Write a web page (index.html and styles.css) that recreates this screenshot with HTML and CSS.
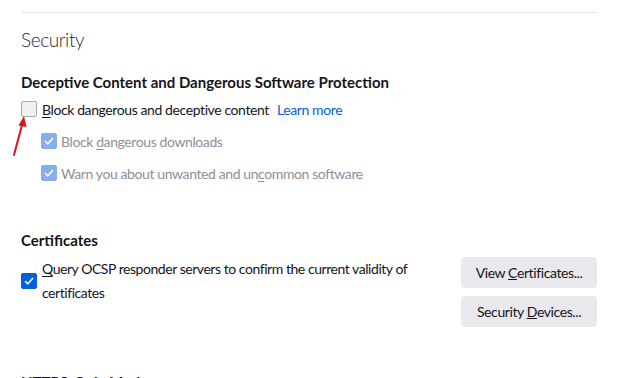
FILE: index.html
```html
<!DOCTYPE html>
<html lang="en">
<head>
  <meta charset="UTF-8">
  <title>Settings - Privacy &amp; Security</title>
  <link rel="stylesheet" href="styles.css">
</head>
<body>

<div class="pane">
  <hr class="divider">

  <h1 class="pane-title">Security</h1>

  <section class="group">
    <h2>Deceptive Content and Dangerous Software Protection</h2>

    <div class="row">
      <span class="box"></span>
      <span class="label"><u>B</u>lock dangerous and deceptive content</span>
      <a class="learn" href="#">Learn more</a>
      <svg class="arrow" width="20" height="48" viewBox="0 0 20 48">
        <line x1="3" y1="42" x2="11" y2="12" stroke="#d9141c" stroke-width="2" stroke-linecap="round"/>
        <polygon points="13,3 15.5,14 7.5,12.5" fill="#d9141c"/>
      </svg>
    </div>

    <div class="row sub">
      <span class="box checked faded"><svg viewBox="0 0 16 16"><path d="M3.5 8.2 L6.6 11.2 L12.6 4.6" fill="none" stroke="#fff" stroke-width="1.8"/></svg></span>
      <span class="label muted">Block <u>d</u>angerous downloads</span>
    </div>

    <div class="row sub">
      <span class="box checked faded"><svg viewBox="0 0 16 16"><path d="M3.5 8.2 L6.6 11.2 L12.6 4.6" fill="none" stroke="#fff" stroke-width="1.8"/></svg></span>
      <span class="label muted">Warn you about unwanted and un<u>c</u>ommon software</span>
    </div>
  </section>

  <section class="group certs">
    <h2>Certificates</h2>
    <div class="cert-row">
      <div class="cert-check">
        <span class="box checked"><svg viewBox="0 0 16 16"><path d="M3.5 8.2 L6.6 11.2 L12.6 4.6" fill="none" stroke="#fff" stroke-width="1.8"/></svg></span>
        <span class="label"><u>Q</u>uery OCSP responder servers to confirm the current validity of certificates</span>
      </div>
      <div class="buttons">
        <button>View <u>C</u>ertificates...</button>
        <button>Security <u>D</u>evices...</button>
      </div>
    </div>
  </section>

  <section class="group https">
    <h2>HTTPS-Only Mode</h2>
  </section>
</div>

</body>
</html>
```

FILE: styles.css
```css
body {
  margin: 0;
  background: #fff;
  font-family: Lato, "Open Sans", sans-serif;
  color: #15141a;
  overflow: hidden;
}
.pane {
  width: 576px;
  padding: 12px 0 0 21px;
}
.divider {
  border: none;
  border-top: 1px solid #e3e3e6;
  margin: 0;
}
.pane-title {
  font-size: 19px;
  font-weight: 300;
  letter-spacing: -0.4px;
  line-height: 28px;
  margin: 13px 0 0;
  color: #2b2a33;
}
.group h2 {
  font-size: 15px;
  font-weight: 700;
  line-height: 22px;
  margin: 0;
}
.group {
  margin-top: 17px;
}
.row {
  position: relative;
  display: flex;
  align-items: center;
  height: 32px;
  font-size: 14px;
  letter-spacing: -0.4px;
}
.row.sub {
  padding-left: 20px;
}
.box {
  width: 14px;
  height: 14px;
  border: 1px solid #a8a8ad;
  border-radius: 2px;
  background: #f0f0f2;
  margin-right: 5px;
  flex: none;
  display: flex;
}
.sub .box {
  margin-right: 4px;
}
.box svg {
  width: 14px;
  height: 14px;
}
.box.checked {
  background: #0060df;
  border-color: #0060df;
}
.box.faded {
  background: #86b0ec;
  border-color: #86b0ec;
}
.label u {
  text-underline-offset: 2px;
}
.muted {
  color: #8f8f95;
}
.learn {
  color: #0061e0;
  text-decoration: none;
  margin-left: 8px;
}
.arrow {
  position: absolute;
  left: -10px;
  top: 20px;
}
.certs {
  margin-top: 40px;
}
.cert-row {
  display: flex;
  justify-content: space-between;
  align-items: flex-start;
  margin-top: 6px;
}
.cert-check {
  display: flex;
  align-items: center;
  width: 402px;
  font-size: 14px;
  letter-spacing: -0.45px;
  line-height: 24px;
}
.buttons {
  display: flex;
  flex-direction: column;
  gap: 8px;
}
button {
  width: 136px;
  height: 31px;
  border: none;
  border-radius: 4px;
  background: #e9e9ed;
  font-family: inherit;
  font-size: 14px;
  letter-spacing: -0.4px;
  color: #15141a;
  padding: 0;
}
.https {
  margin-top: 44px;
}
```
